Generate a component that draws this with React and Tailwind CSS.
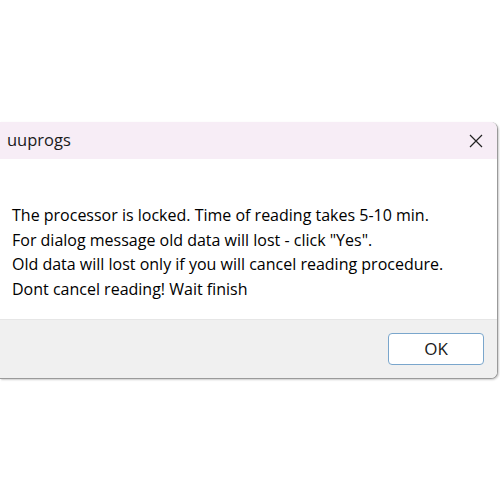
export default function App() {
  const lines = [
    "The processor is locked. Time of reading takes 5-10 min.",
    'For dialog message old data will lost - click "Yes".',
    "Old data will lost only if you will cancel reading procedure.",
    "Dont cancel reading! Wait finish",
  ];

  return (
    <div
      className="h-[500px] w-[500px] bg-white pt-[122px]"
      style={{ fontFamily: '"Open Sans", "Noto Sans", sans-serif' }}
    >
      <div className="w-[498px] overflow-hidden rounded-r-[7px] border-r border-b border-[#9a9a9a] bg-white shadow-[1px_1px_2px_rgba(0,0,0,0.2)]">
        {/* title bar */}
        <div className="flex h-[37px] items-center justify-between bg-[#f7edf6] pl-[7px] pr-[12px]">
          <span className="text-[16.5px] text-[#1a1a1a]">uuprogs</span>
          <svg width="14" height="14" viewBox="0 0 14 14" className="mr-[2px]">
            <path d="M1 1 L13 13 M13 1 L1 13" stroke="#222" strokeWidth="1.2" fill="none" />
          </svg>
        </div>

        {/* message */}
        <div className="h-[160px] pl-[12px] pt-[44px]">
          {lines.map((line) => (
            <p key={line} className="text-[16px] leading-[24.5px] text-black">
              {line}
            </p>
          ))}
        </div>

        {/* footer */}
        <div className="flex h-[59px] items-center justify-end border-t border-[#e6e6e6] bg-[#f0f0f0] pr-[13px]">
          <button className="flex h-[32px] w-[96px] items-center justify-center rounded-[4px] border border-[#7aa6cc] bg-white text-[17px] text-[#1a1a1a]">
            OK
          </button>
        </div>
      </div>
    </div>
  );
}
